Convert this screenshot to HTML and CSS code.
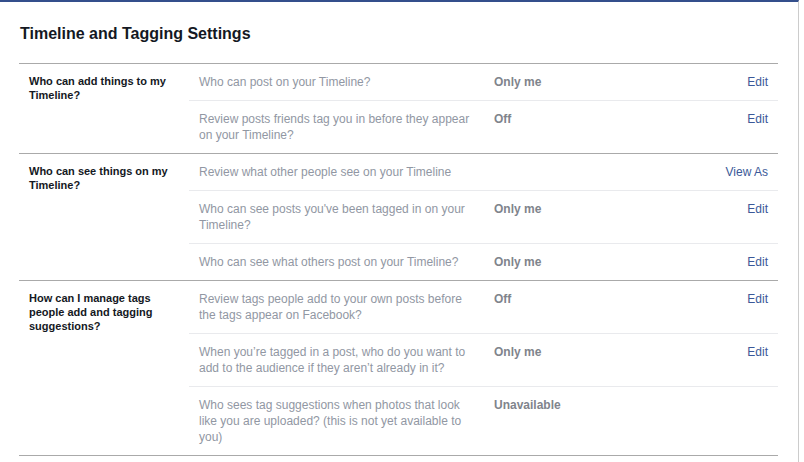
FILE: index.html
```html
<!DOCTYPE html>
<html lang="en">
<head>
<meta charset="utf-8">
<title>Timeline and Tagging Settings</title>
<link rel="stylesheet" href="styles.css">
</head>
<body>
<div class="page">
  <div class="panel">
    <h2 class="title">Timeline and Tagging Settings</h2>

    <div class="section">
      <div class="section-label">Who can add things to my Timeline?</div>
      <div class="rows">
        <div class="row">
          <div class="desc">Who can post on your Timeline?</div>
          <div class="value">Only me</div>
          <div class="action"><a href="#" class="link">Edit</a></div>
        </div>
        <div class="row">
          <div class="desc">Review posts friends tag you in before they appear on your Timeline?</div>
          <div class="value">Off</div>
          <div class="action"><a href="#" class="link">Edit</a></div>
        </div>
      </div>
    </div>

    <div class="section">
      <div class="section-label">Who can see things on my Timeline?</div>
      <div class="rows">
        <div class="row">
          <div class="desc">Review what other people see on your Timeline</div>
          <div class="value"></div>
          <div class="action"><a href="#" class="link">View As</a></div>
        </div>
        <div class="row">
          <div class="desc">Who can see posts you've been tagged in on your Timeline?</div>
          <div class="value">Only me</div>
          <div class="action"><a href="#" class="link">Edit</a></div>
        </div>
        <div class="row">
          <div class="desc">Who can see what others post on your Timeline?</div>
          <div class="value">Only me</div>
          <div class="action"><a href="#" class="link">Edit</a></div>
        </div>
      </div>
    </div>

    <div class="section">
      <div class="section-label">How can I manage tags people add and tagging suggestions?</div>
      <div class="rows">
        <div class="row">
          <div class="desc">Review tags people add to your own posts before the tags appear on Facebook?</div>
          <div class="value">Off</div>
          <div class="action"><a href="#" class="link">Edit</a></div>
        </div>
        <div class="row">
          <div class="desc">When you’re tagged in a post, who do you want to add to the audience if they aren’t already in it?</div>
          <div class="value">Only me</div>
          <div class="action"><a href="#" class="link">Edit</a></div>
        </div>
        <div class="row">
          <div class="desc">Who sees tag suggestions when photos that look like you are uploaded? (this is not yet available to you)</div>
          <div class="value">Unavailable</div>
          <div class="action"></div>
        </div>
      </div>
    </div>
  </div>
</div>
</body>
</html>
```

FILE: styles.css
```css
html, body {
  margin: 0;
  padding: 0;
  background: #ffffff;
}

body {
  font-family: "Liberation Sans", Arial, Helvetica, sans-serif;
  font-size: 12px;
  color: #141823;
}

.page {
  width: 798px;
  min-height: 460px;
  border-top: 2px solid #344f8c;
  border-right: 1px solid #cccccc;
  box-sizing: content-box;
}

.panel {
  padding: 0 20px 0 19px;
}

.title {
  margin: 0;
  padding: 22px 0 19px 1px;
  font-size: 16px;
  line-height: 20px;
  font-weight: bold;
  color: #141823;
  border-bottom: 1px solid #aaaaaa;
}

.section {
  display: flex;
  border-bottom: 1px solid #aaaaaa;
}

.section-label {
  width: 150px;
  flex: 0 0 150px;
  padding: 10px 10px 0 10px;
  font-size: 11px;
  line-height: 14px;
  font-weight: bold;
  color: #141823;
}

.rows {
  flex: 1;
  display: flex;
  flex-direction: column;
}

.row {
  display: flex;
  align-items: flex-start;
  padding: 10px 10px 10px 10px;
  line-height: 16px;
  border-bottom: 1px solid #e9eaed;
}

.row:last-child {
  border-bottom: none;
}

.desc {
  width: 276px;
  flex: 0 0 276px;
  margin-right: 19px;
  color: #9197a3;
}

.value {
  flex: 1;
  font-weight: bold;
  color: #80848c;
}

.action {
  text-align: right;
}

.link {
  color: #3b5998;
  text-decoration: none;
}
```
